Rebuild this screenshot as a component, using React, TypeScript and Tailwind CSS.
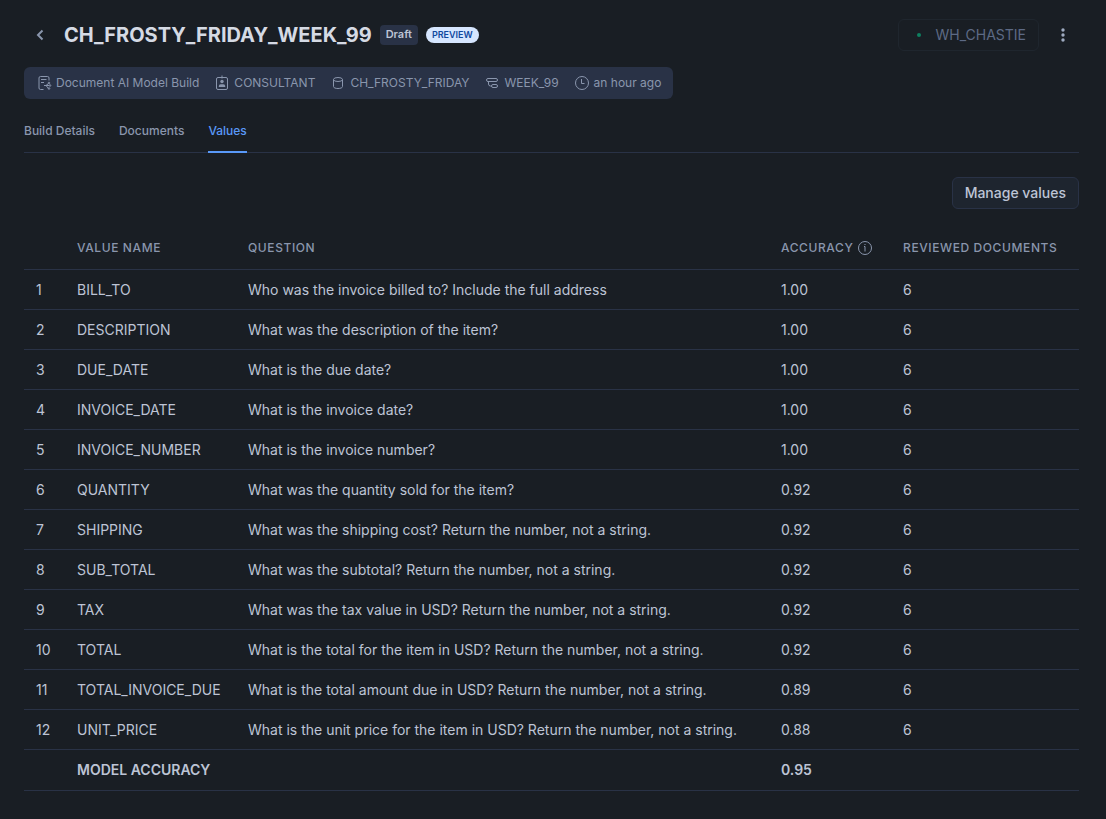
import type { ReactNode } from "react";

type Row = { name: string; question: string; accuracy: string; reviewed: number };

const rows: Row[] = [
  { name: "BILL_TO", question: "Who was the invoice billed to? Include the full address", accuracy: "1.00", reviewed: 6 },
  { name: "DESCRIPTION", question: "What was the description of the item?", accuracy: "1.00", reviewed: 6 },
  { name: "DUE_DATE", question: "What is the due date?", accuracy: "1.00", reviewed: 6 },
  { name: "INVOICE_DATE", question: "What is the invoice date?", accuracy: "1.00", reviewed: 6 },
  { name: "INVOICE_NUMBER", question: "What is the invoice number?", accuracy: "1.00", reviewed: 6 },
  { name: "QUANTITY", question: "What was the quantity sold for the item?", accuracy: "0.92", reviewed: 6 },
  { name: "SHIPPING", question: "What was the shipping cost? Return the number, not a string.", accuracy: "0.92", reviewed: 6 },
  { name: "SUB_TOTAL", question: "What was the subtotal? Return the number, not a string.", accuracy: "0.92", reviewed: 6 },
  { name: "TAX", question: "What was the tax value in USD? Return the number, not a string.", accuracy: "0.92", reviewed: 6 },
  { name: "TOTAL", question: "What is the total for the item in USD? Return the number, not a string.", accuracy: "0.92", reviewed: 6 },
  { name: "TOTAL_INVOICE_DUE", question: "What is the total amount due in USD? Return the number, not a string.", accuracy: "0.89", reviewed: 6 },
  { name: "UNIT_PRICE", question: "What is the unit price for the item in USD? Return the number, not a string.", accuracy: "0.88", reviewed: 6 },
];

function Icon({ children }: { children: ReactNode }) {
  return (
    <svg viewBox="0 0 16 16" className="size-4 shrink-0" fill="none" stroke="currentColor" aria-hidden="true">
      {children}
    </svg>
  );
}

function ModelIcon() {
  return (
    <Icon>
      <path d="M7.500 14.500h-3a1.500 1.500 0 0 1-1.500-1.500v-10a1.500 1.500 0 0 1 1.500-1.500h7a1.500 1.500 0 0 1 1.500 1.500v2.500M5 4.500h5.500M5 7.500h3" />
      <path d="M8 10.500h5M10 10.500l2.500-2M10 10.500l2.500 3" />
      <circle cx="13" cy="8" r=".8" />
      <circle cx="14" cy="10.500" r=".8" />
      <circle cx="13" cy="13.500" r=".8" />
    </Icon>
  );
}

function RoleIcon() {
  return (
    <Icon>
      <rect x="2.500" y="2.500" width="11" height="12" rx="1.500" />
      <path d="M8 .5v3" />
      <circle cx="8" cy="6.500" r="1.700" fill="currentColor" stroke="none" />
      <path d="M4.800 12v-1a1.800 1.800 0 0 1 1.800-1.800h2.800a1.800 1.800 0 0 1 1.800 1.800v1z" fill="currentColor" stroke="none" />
    </Icon>
  );
}

function DatabaseIcon() {
  return (
    <Icon>
      <ellipse cx="8" cy="4.500" rx="4.500" ry="2" />
      <path d="M3.500 4.500v7c0 1.300 2 2 4.500 2s4.500-.7 4.500-2v-7" />
    </Icon>
  );
}

function SchemaIcon() {
  return (
    <Icon>
      <rect x="2.500" y="3.500" width="11" height="3" rx="1.500" />
      <rect x="7.500" y="9.500" width="6" height="3" rx="1.500" />
      <path d="M4.500 6.500v2.500a2 2 0 0 0 2 2h1" />
    </Icon>
  );
}

function ClockIcon() {
  return (
    <Icon>
      <circle cx="8" cy="8" r="6.500" />
      <path d="M7.500 4v4.500h3" />
    </Icon>
  );
}

function InfoIcon() {
  return (
    <Icon>
      <circle cx="8" cy="8" r="6.500" />
      <path d="M7 6.500h1v5M7.500 4.500h1" />
    </Icon>
  );
}

const details = [
  { label: "Document AI Model Build", icon: <ModelIcon /> },
  { label: "CONSULTANT", icon: <RoleIcon /> },
  { label: "CH_FROSTY_FRIDAY", icon: <DatabaseIcon /> },
  { label: "WEEK_99", icon: <SchemaIcon /> },
  { label: "an hour ago", icon: <ClockIcon /> },
];

export default function App() {
  return (
    <div className="min-h-screen bg-[#191e24] pt-4 pr-[27px] pb-7 pl-6 font-['Inter',sans-serif] text-sm text-[#bdc4d5]">
      <header className="flex h-[38px] items-center">
        <button type="button" aria-label="Back" className="flex size-8 items-center justify-center text-[#8a96ad]">
          <svg viewBox="0 0 16 16" className="size-4" fill="none" stroke="currentColor" strokeWidth="2" aria-hidden="true">
            <path d="M10.500 3.500 6 8l4.500 4.500" />
          </svg>
        </button>
        <h1 className="ml-2 text-xl font-bold text-[#d5dae4]">CH_FROSTY_FRIDAY_WEEK_99</h1>
        <span className="ml-2 flex h-5 items-center rounded bg-[#293246] px-1.5 text-[11px] font-semibold">Draft</span>
        <span className="ml-2 flex h-4 items-center rounded-full bg-[#d6e6ff] px-1.5 text-[9px] font-semibold text-[#11499f]">PREVIEW</span>
        <button type="button" className="ml-auto flex h-8 items-center rounded-md border border-[#1f262e] pr-3 pl-[18px] text-[#5d6a85]">
          <span className="mr-3.5 size-1 rounded-full bg-[#0e8060]" />
          WH_CHASTIE
        </button>
        <button type="button" aria-label="More options" className="ml-2 flex size-8 items-center justify-center text-[#9fabc1]">
          <svg viewBox="0 0 16 16" className="size-4" fill="currentColor" aria-hidden="true">
            <circle cx="8" cy="3" r="1.700" />
            <circle cx="8" cy="8" r="1.700" />
            <circle cx="8" cy="13" r="1.700" />
          </svg>
        </button>
      </header>

      <ul className="mt-[13px] flex h-8 w-fit items-center gap-[15px] rounded-md bg-[#293246] px-3 text-xs text-[#8a96ad]">
        {details.map((item) => (
          <li key={item.label} className="flex items-center gap-1 whitespace-nowrap">
            {item.icon}
            {item.label}
          </li>
        ))}
      </ul>

      <nav className="mt-4 flex gap-6 border-b border-[#293246] text-xs font-medium text-[#8a96ad]">
        <a href="#build-details" className="-mb-px h-[38px] pt-2">Build Details</a>
        <a href="#documents" className="-mb-px h-[38px] pt-2">Documents</a>
        <a href="#values" aria-current="page" className="-mb-px h-[38px] border-b-2 border-[#5999f8] pt-2 text-[#5999f8]">Values</a>
      </nav>

      <div className="mt-6 flex justify-end">
        <button type="button" className="h-8 rounded-md border border-[#293246] bg-[#1e252f] px-3 font-medium">Manage values</button>
      </div>

      <table className="mt-4 w-full table-fixed border-separate border-spacing-0 text-left">
        <colgroup>
          <col className="w-[41px]" />
          <col className="w-[171px]" />
          <col />
          <col className="w-[122px]" />
          <col className="w-[188px]" />
        </colgroup>
        <thead className="text-xs tracking-wider text-[#8a96ad] [&_th]:h-[45px] [&_th]:border-b [&_th]:border-[#293246] [&_th]:px-3 [&_th]:pt-0.5 [&_th]:font-medium [&_th]:whitespace-nowrap">
          <tr>
            <th aria-label="Row" />
            <th>VALUE NAME</th>
            <th>QUESTION</th>
            <th>
              <span className="flex items-center gap-1">
                ACCURACY
                <InfoIcon />
              </span>
            </th>
            <th>REVIEWED DOCUMENTS</th>
          </tr>
        </thead>
        <tbody className="[&_td]:h-10 [&_td]:border-b [&_td]:border-[#293246] [&_td]:px-3 [&_td]:whitespace-nowrap">
          {rows.map((row, index) => (
            <tr key={row.name}>
              <td>{index + 1}</td>
              <td>{row.name}</td>
              <td>{row.question}</td>
              <td>{row.accuracy}</td>
              <td>{row.reviewed}</td>
            </tr>
          ))}
        </tbody>
        <tfoot className="font-semibold [&_td]:h-[41px] [&_td]:border-b [&_td]:border-[#293246] [&_td]:px-3">
          <tr>
            <td />
            <td colSpan={2}>MODEL ACCURACY</td>
            <td>0.95</td>
            <td />
          </tr>
        </tfoot>
      </table>
    </div>
  );
}
